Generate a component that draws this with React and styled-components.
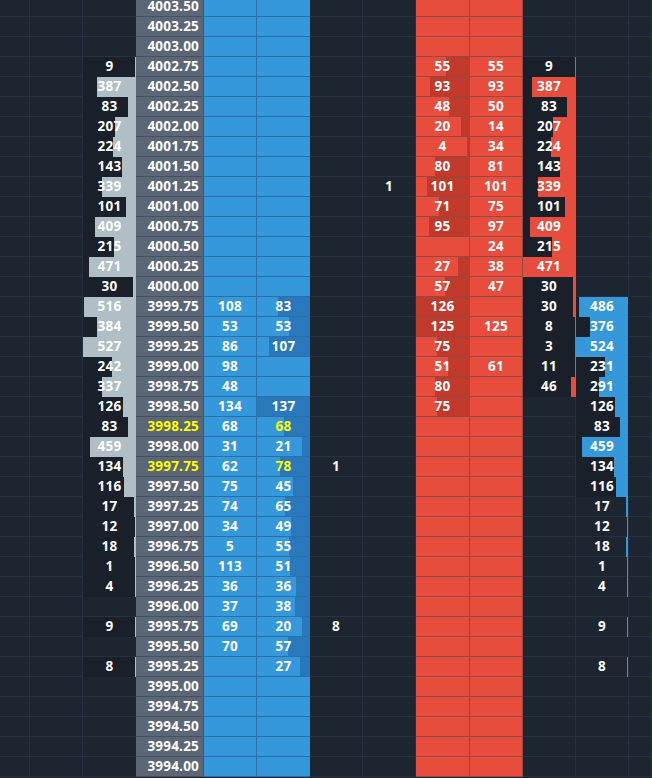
import React from 'react';
import styled, { createGlobalStyle } from 'styled-components';

const C = {
  bg: '#1c2530',
  grid: '#253140',
  dark: '#19202a',
  price: '#5b6677',
  priceLine: '#46515f',
  blue: '#3498db',
  blueDark: '#2978bc',
  blueLine: '#2d6ea5',
  red: '#e74c3c',
  redDark: '#c0392b',
  redLine: '#8e4a45',
  gray: '#b0bec5',
  yellow: '#ffff00',
  text: '#ffffff',
};

const GlobalStyle = createGlobalStyle`
  html, body { margin: 0; padding: 0; background: ${C.bg}; overflow: hidden; }
  body { font-family: "Open Sans", "Noto Sans", "DejaVu Sans", sans-serif; }
`;

const Ladder = styled.div`
  display: flex;
  flex-direction: column;
  margin-top: -3px;
  width: 652px;
`;

const Row = styled.div`
  display: grid;
  grid-template-columns: 30px 53px 53px 68px 53px 53px 53px 53px 54px 53px 53px 53px 1fr;
  height: 20px;
`;

const BaseCell = styled.div`
  position: relative;
  box-sizing: border-box;
  height: 20px;
  padding-top: 1px;
  display: flex;
  align-items: center;
  justify-content: center;
  font-size: 13.5px;
  font-weight: 700;
  letter-spacing: 0.2px;
  line-height: 1;
  color: ${(p) => (p.$hl ? C.yellow : C.text)};
  white-space: nowrap;
`;

const GridCell = styled(BaseCell)`
  background: ${C.bg};
  border-bottom: 1px solid ${C.grid};
  border-right: 1px solid ${C.grid};
`;

const VolumeCell = styled(BaseCell)`
  background: ${(p) => (p.$filled ? C.dark : C.bg)};
  border-bottom: 1px solid ${(p) => (p.$filled ? C.dark : C.grid)};
  border-right: ${(p) => (p.$edge ? `1px solid ${p.$filled ? C.dark : C.grid}` : 'none')};
`;

const PriceCell = styled(BaseCell)`
  justify-content: flex-end;
  padding-right: 4px;
  background: ${C.price};
  border-bottom: 1px solid ${C.priceLine};
  border-right: 1px solid ${C.priceLine};
`;

const BlueCell = styled(BaseCell)`
  background: ${C.blue};
  border-bottom: 1px solid ${C.blueLine};
  border-right: ${(p) => (p.$edge ? `1px solid ${C.blueLine}` : 'none')};
`;

const RedCell = styled(BaseCell)`
  background: ${C.red};
  border-bottom: 1px solid ${C.redLine};
  border-right: 1px solid ${C.redLine};
`;

const Bar = styled.div`
  position: absolute;
  top: 0;
  bottom: ${(p) => (p.$full ? '-1px' : '0')};
  right: ${(p) => (p.$over ? '-1px' : '0')};
  background: ${(p) => p.$color};
`;

const Label = styled.span`
  position: relative;
  z-index: 1;
`;

const rows = [
  ['4003.50'],
  ['4003.25'],
  ['4003.00'],
  ['4002.75', { bid: 9, r1: 55, r2: 55, ask: 9 }],
  ['4002.50', { bid: 387, r1: 93, r2: 93, ask: 387 }],
  ['4002.25', { bid: 83, r1: 48, r2: 50, ask: 83 }],
  ['4002.00', { bid: 207, r1: 20, r2: 14, ask: 207 }],
  ['4001.75', { bid: 224, r1: 4, r2: 34, ask: 224 }],
  ['4001.50', { bid: 143, r1: 80, r2: 81, ask: 143 }],
  ['4001.25', { bid: 339, c2: 1, r1: 101, r2: 101, ask: 339 }],
  ['4001.00', { bid: 101, r1: 71, r2: 75, ask: 101 }],
  ['4000.75', { bid: 409, r1: 95, r2: 97, ask: 409 }],
  ['4000.50', { bid: 215, r2: 24, ask: 215 }],
  ['4000.25', { bid: 471, r1: 27, r2: 38, ask: 471 }],
  ['4000.00', { bid: 30, r1: 57, r2: 47, ask: 30 }],
  ['3999.75', { bid: 516, b1: 108, b2: 83, r1: 126, ask: 30, far: 486 }],
  ['3999.50', { bid: 384, b1: 53, b2: 53, r1: 125, r2: 125, ask: 8, far: 376 }],
  ['3999.25', { bid: 527, b1: 86, b2: 107, r1: 75, ask: 3, far: 524 }],
  ['3999.00', { bid: 242, b1: 98, r1: 51, r2: 61, ask: 11, far: 231 }],
  ['3998.75', { bid: 337, b1: 48, r1: 80, ask: 46, far: 291 }],
  ['3998.50', { bid: 126, b1: 134, b2: 137, r1: 75, far: 126 }],
  ['3998.25', { hl: true, bid: 83, b1: 68, b2: 68, far: 83 }],
  ['3998.00', { bid: 459, b1: 31, b2: 21, far: 459 }],
  ['3997.75', { hl: true, bid: 134, b1: 62, b2: 78, c1: 1, far: 134 }],
  ['3997.50', { bid: 116, b1: 75, b2: 45, far: 116 }],
  ['3997.25', { bid: 17, b1: 74, b2: 65, far: 17 }],
  ['3997.00', { bid: 12, b1: 34, b2: 49, far: 12 }],
  ['3996.75', { bid: 18, b1: 5, b2: 55, far: 18 }],
  ['3996.50', { bid: 1, b1: 113, b2: 51, far: 1 }],
  ['3996.25', { bid: 4, b1: 36, b2: 36, far: 4 }],
  ['3996.00', { b1: 37, b2: 38 }],
  ['3995.75', { bid: 9, b1: 69, b2: 20, c1: 8, far: 9 }],
  ['3995.50', { b1: 70, b2: 57 }],
  ['3995.25', { bid: 8, b2: 27, far: 8 }],
  ['3995.00'],
  ['3994.75'],
  ['3994.50'],
  ['3994.25'],
  ['3994.00'],
];

const MAX = { bid: 527, ask: 471, far: 524, b2: 137, r1: 126 };
const barW = (v, key) => (v ? Math.max(1, Math.round((v / MAX[key]) * 53)) : 0);

function Volume({ value, max, color, edge, over, darkFill = true }) {
  const filled = value != null && darkFill;
  return (
    <VolumeCell $filled={filled} $edge={edge}>
      {value != null && (
        <Bar $full $over={over} $color={color} style={{ width: barW(value, max) }} />
      )}
      {value != null && <Label>{value}</Label>}
    </VolumeCell>
  );
}

export default function App() {
  return (
    <>
      <GlobalStyle />
      <Ladder>
        {rows.map(([price, d = {}]) => (
          <Row key={price}>
            <GridCell />
            <GridCell />
            <Volume value={d.bid} max="bid" color={C.gray} />
            <PriceCell $hl={d.hl}>{price}</PriceCell>
            <BlueCell $edge>{d.b1}</BlueCell>
            <BlueCell $hl={d.hl}>
              {d.b2 != null && <Bar $color={C.blueDark} style={{ width: barW(d.b2, 'b2') }} />}
              {d.b2 != null && <Label>{d.b2}</Label>}
            </BlueCell>
            <GridCell>{d.c1}</GridCell>
            <GridCell>{d.c2}</GridCell>
            <RedCell>
              {d.r1 != null && <Bar $color={C.redDark} style={{ width: barW(d.r1, 'r1') }} />}
              {d.r1 != null && <Label>{d.r1}</Label>}
            </RedCell>
            <RedCell>{d.r2}</RedCell>
            <Volume value={d.ask} max="ask" color={C.red} edge over />
            <Volume value={d.far} max="far" color={C.blue} edge darkFill={d.far >= 20} />
            <GridCell />
          </Row>
        ))}
      </Ladder>
    </>
  );
}
